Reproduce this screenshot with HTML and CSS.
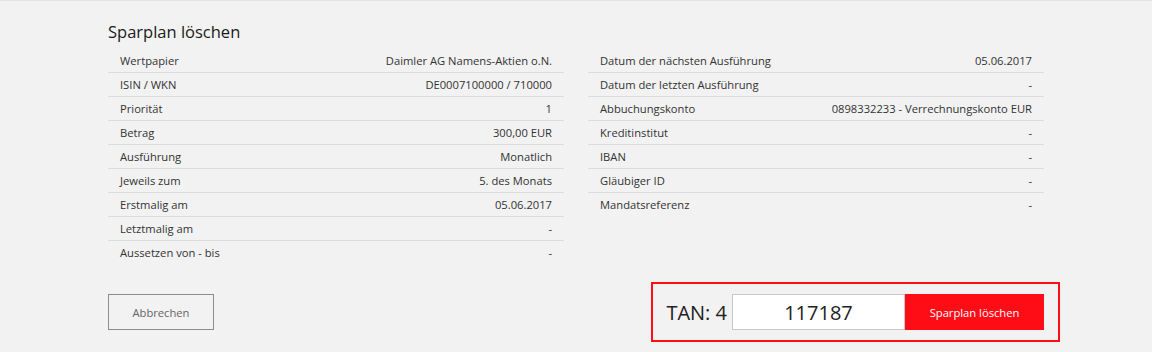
FILE: index.html
```html
<!DOCTYPE html>
<html lang="de">

<head>
  <meta charset="UTF-8">
  <meta name="viewport" content="width=device-width, initial-scale=1.0">
  <title>Sparplan löschen</title>
  <link rel="stylesheet" href="styles.css">
</head>

<body>
  <main class="page">
    <h1>Sparplan löschen</h1>

    <div class="details">
      <dl class="table">
        <div class="row"><dt>Wertpapier</dt><dd>Daimler AG Namens-Aktien o.N.</dd></div>
        <div class="row"><dt>ISIN / WKN</dt><dd>DE0007100000 / 710000</dd></div>
        <div class="row"><dt>Priorität</dt><dd>1</dd></div>
        <div class="row"><dt>Betrag</dt><dd>300,00 EUR</dd></div>
        <div class="row"><dt>Ausführung</dt><dd>Monatlich</dd></div>
        <div class="row"><dt>Jeweils zum</dt><dd>5. des Monats</dd></div>
        <div class="row"><dt>Erstmalig am</dt><dd>05.06.2017</dd></div>
        <div class="row"><dt>Letztmalig am</dt><dd>-</dd></div>
        <div class="row"><dt>Aussetzen von - bis</dt><dd>-</dd></div>
      </dl>

      <dl class="table">
        <div class="row"><dt>Datum der nächsten Ausführung</dt><dd>05.06.2017</dd></div>
        <div class="row"><dt>Datum der letzten Ausführung</dt><dd>-</dd></div>
        <div class="row"><dt>Abbuchungskonto</dt><dd>0898332233 - Verrechnungskonto EUR</dd></div>
        <div class="row"><dt>Kreditinstitut</dt><dd>-</dd></div>
        <div class="row"><dt>IBAN</dt><dd>-</dd></div>
        <div class="row"><dt>Gläubiger ID</dt><dd>-</dd></div>
        <div class="row"><dt>Mandatsreferenz</dt><dd>-</dd></div>
      </dl>
    </div>

    <div class="actions">
      <button class="cancel">Abbrechen</button>

      <div class="tan">
        <label for="tan">TAN: 4</label>
        <input id="tan" type="text" value="117187">
        <button class="submit">Sparplan löschen</button>
      </div>
    </div>
  </main>
</body>

</html>
```

FILE: styles.css
```css
body {
  background: #f2f2f2;
  border-top: 1px solid #e4e4e4;
  color: #333;
  font-family: "Open Sans", "Liberation Sans", sans-serif;
  margin: 0;
}

.page {
  padding: 19px 108px 0;
  width: 936px;

  h1 {
    color: #1a1a1a;
    font-size: 16.5px;
    font-weight: 400;
    line-height: 24px;
    margin: 0 0 5px;
  }
}

.details {
  display: grid;
  gap: 24px;
  grid-template-columns: 1fr 1fr;
}

.table {
  font-size: 11.2px;
  margin: 0;

  .row {
    border-bottom: 1px solid #dcdcdc;
    display: flex;
    height: 23px;
    justify-content: space-between;
    line-height: 23px;
    padding: 0 12px;

    &:last-child {
      border-bottom: none;
    }
  }

  dd {
    margin: 0;
  }
}

.actions {
  align-items: center;
  display: flex;
  justify-content: space-between;
  margin-top: 18px;
}

.cancel {
  background: transparent;
  border: 1px solid #8c8c8c;
  color: #666;
  font-family: inherit;
  font-size: 11.2px;
  height: 36px;
  width: 106px;
}

.tan {
  align-items: center;
  border: 2px solid #ff1010;
  display: flex;
  margin-right: -16px;
  padding: 10px 14px 10px 13px;

  label {
    color: #222;
    font-size: 20px;
    margin-right: 5px;
  }

  input {
    background: #fff;
    border: 1px solid #c8c8c8;
    box-sizing: border-box;
    color: #222;
    font-family: inherit;
    font-size: 20px;
    height: 36px;
    padding: 0;
    text-align: center;
    width: 173px;
  }

  .submit {
    background: #ff0d17;
    border: none;
    color: #fff;
    font-family: inherit;
    font-size: 11.2px;
    height: 36px;
    width: 139px;
  }
}
```
